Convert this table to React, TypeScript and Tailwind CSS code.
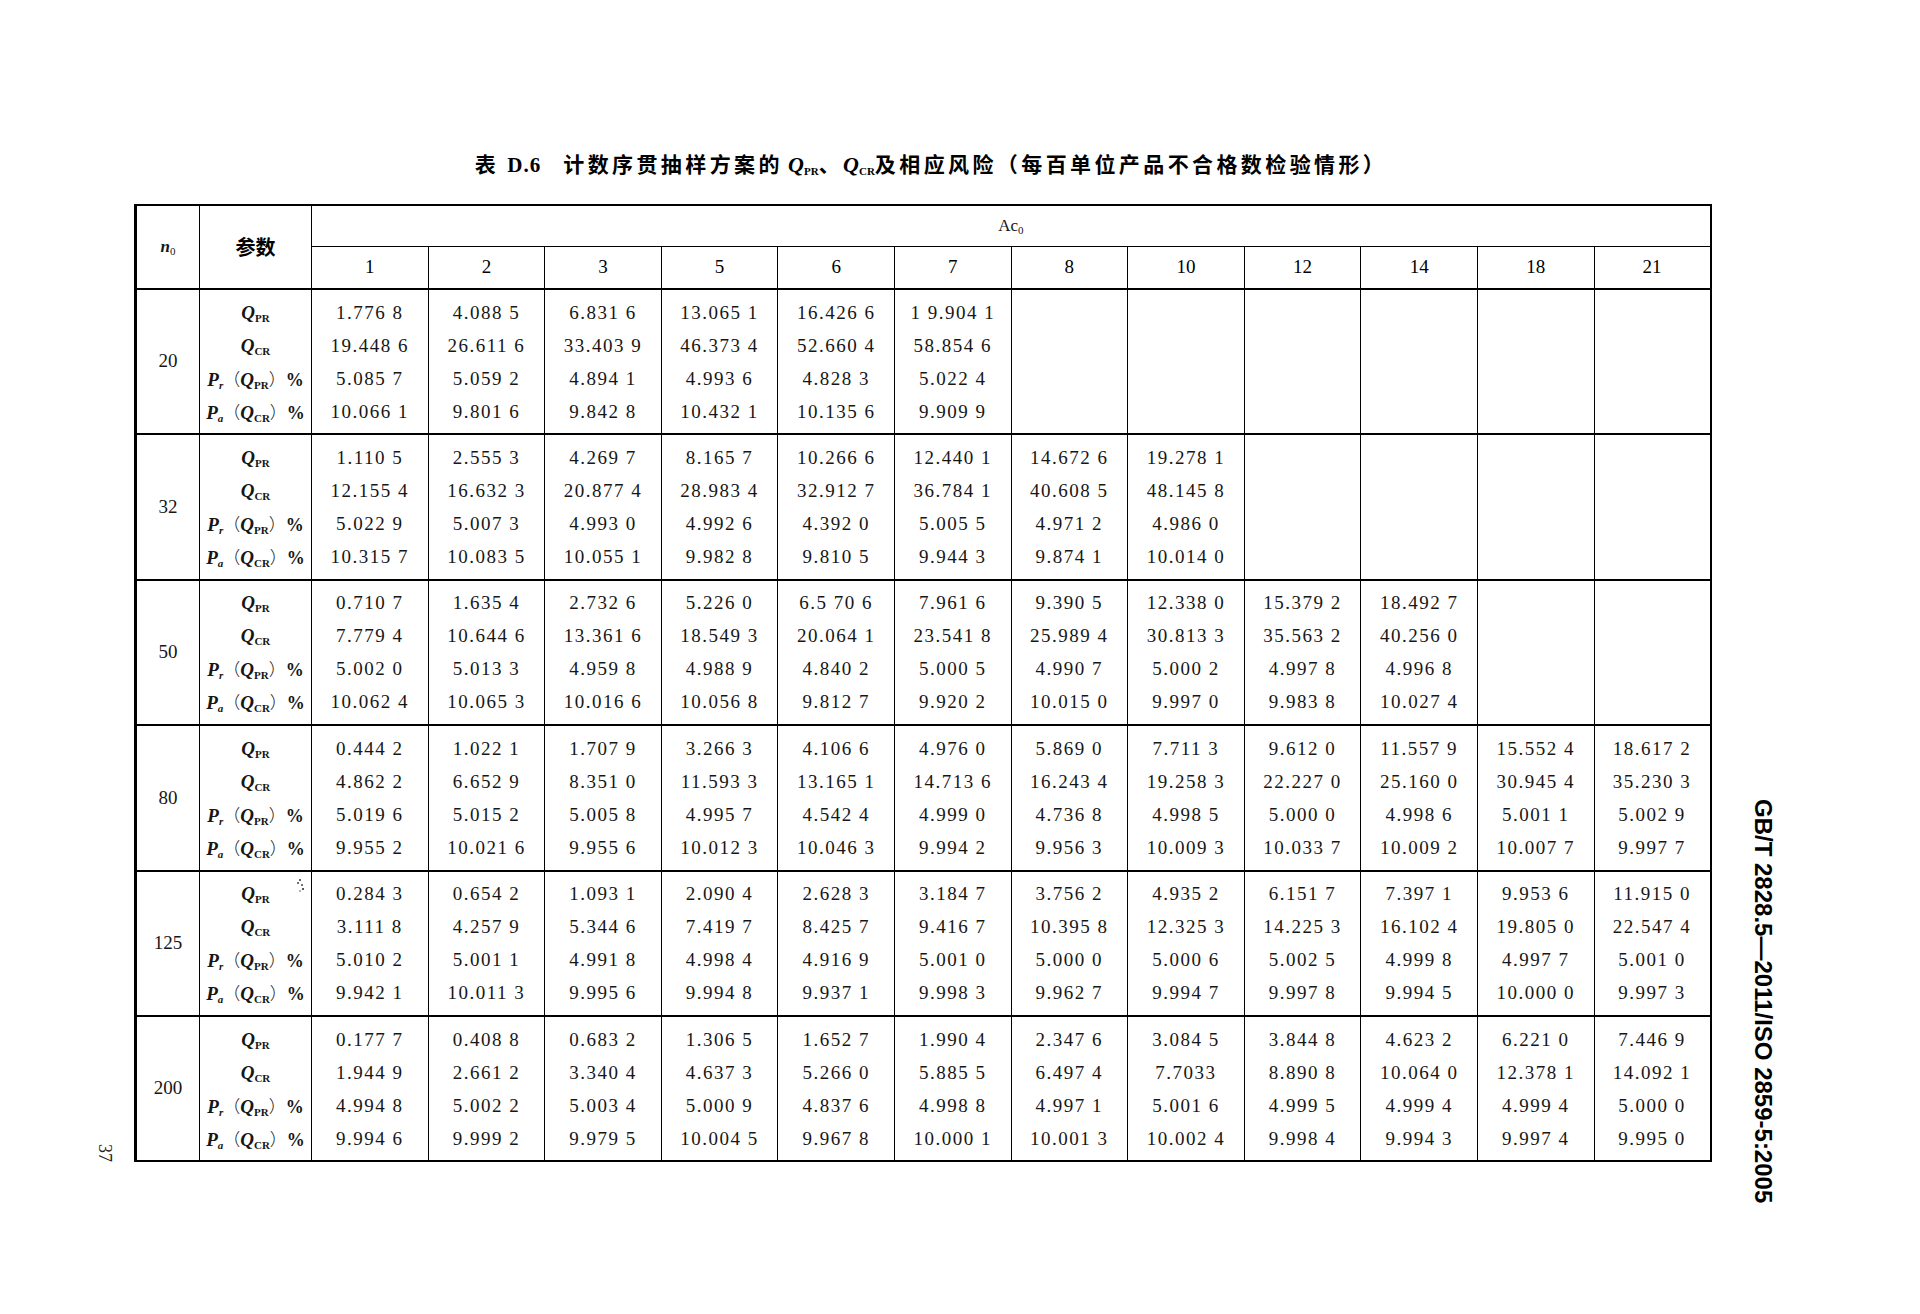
import React from "react";

const cols = ["1", "2", "3", "5", "6", "7", "8", "10", "12", "14", "18", "21"];

type Group = { n: string; rows: string[][] };

const groups: Group[] = [
  {
    n: "20",
    rows: [
      ["1.776 8", "4.088 5", "6.831 6", "13.065 1", "16.426 6", "1 9.904 1"],
      ["19.448 6", "26.611 6", "33.403 9", "46.373 4", "52.660 4", "58.854 6"],
      ["5.085 7", "5.059 2", "4.894 1", "4.993 6", "4.828 3", "5.022 4"],
      ["10.066 1", "9.801 6", "9.842 8", "10.432 1", "10.135 6", "9.909 9"],
    ],
  },
  {
    n: "32",
    rows: [
      ["1.110 5", "2.555 3", "4.269 7", "8.165 7", "10.266 6", "12.440 1", "14.672 6", "19.278 1"],
      ["12.155 4", "16.632 3", "20.877 4", "28.983 4", "32.912 7", "36.784 1", "40.608 5", "48.145 8"],
      ["5.022 9", "5.007 3", "4.993 0", "4.992 6", "4.392 0", "5.005 5", "4.971 2", "4.986 0"],
      ["10.315 7", "10.083 5", "10.055 1", "9.982 8", "9.810 5", "9.944 3", "9.874 1", "10.014 0"],
    ],
  },
  {
    n: "50",
    rows: [
      ["0.710 7", "1.635 4", "2.732 6", "5.226 0", "6.5 70 6", "7.961 6", "9.390 5", "12.338 0", "15.379 2", "18.492 7"],
      ["7.779 4", "10.644 6", "13.361 6", "18.549 3", "20.064 1", "23.541 8", "25.989 4", "30.813 3", "35.563 2", "40.256 0"],
      ["5.002 0", "5.013 3", "4.959 8", "4.988 9", "4.840 2", "5.000 5", "4.990 7", "5.000 2", "4.997 8", "4.996 8"],
      ["10.062 4", "10.065 3", "10.016 6", "10.056 8", "9.812 7", "9.920 2", "10.015 0", "9.997 0", "9.983 8", "10.027 4"],
    ],
  },
  {
    n: "80",
    rows: [
      ["0.444 2", "1.022 1", "1.707 9", "3.266 3", "4.106 6", "4.976 0", "5.869 0", "7.711 3", "9.612 0", "11.557 9", "15.552 4", "18.617 2"],
      ["4.862 2", "6.652 9", "8.351 0", "11.593 3", "13.165 1", "14.713 6", "16.243 4", "19.258 3", "22.227 0", "25.160 0", "30.945 4", "35.230 3"],
      ["5.019 6", "5.015 2", "5.005 8", "4.995 7", "4.542 4", "4.999 0", "4.736 8", "4.998 5", "5.000 0", "4.998 6", "5.001 1", "5.002 9"],
      ["9.955 2", "10.021 6", "9.955 6", "10.012 3", "10.046 3", "9.994 2", "9.956 3", "10.009 3", "10.033 7", "10.009 2", "10.007 7", "9.997 7"],
    ],
  },
  {
    n: "125",
    rows: [
      ["0.284 3", "0.654 2", "1.093 1", "2.090 4", "2.628 3", "3.184 7", "3.756 2", "4.935 2", "6.151 7", "7.397 1", "9.953 6", "11.915 0"],
      ["3.111 8", "4.257 9", "5.344 6", "7.419 7", "8.425 7", "9.416 7", "10.395 8", "12.325 3", "14.225 3", "16.102 4", "19.805 0", "22.547 4"],
      ["5.010 2", "5.001 1", "4.991 8", "4.998 4", "4.916 9", "5.001 0", "5.000 0", "5.000 6", "5.002 5", "4.999 8", "4.997 7", "5.001 0"],
      ["9.942 1", "10.011 3", "9.995 6", "9.994 8", "9.937 1", "9.998 3", "9.962 7", "9.994 7", "9.997 8", "9.994 5", "10.000 0", "9.997 3"],
    ],
  },
  {
    n: "200",
    rows: [
      ["0.177 7", "0.408 8", "0.683 2", "1.306 5", "1.652 7", "1.990 4", "2.347 6", "3.084 5", "3.844 8", "4.623 2", "6.221 0", "7.446 9"],
      ["1.944 9", "2.661 2", "3.340 4", "4.637 3", "5.266 0", "5.885 5", "6.497 4", "7.7033", "8.890 8", "10.064 0", "12.378 1", "14.092 1"],
      ["4.994 8", "5.002 2", "5.003 4", "5.000 9", "4.837 6", "4.998 8", "4.997 1", "5.001 6", "4.999 5", "4.999 4", "4.999 4", "5.000 0"],
      ["9.994 6", "9.999 2", "9.979 5", "10.004 5", "9.967 8", "10.000 1", "10.001 3", "10.002 4", "9.998 4", "9.994 3", "9.997 4", "9.995 0"],
    ],
  },
];

function Q({ s }: { s: string }) {
  return (
    <span className="whitespace-nowrap">
      <span className="font-bold italic text-[19px]">Q</span>
      <span className="relative top-[3px] text-[11px] font-bold not-italic">{s}</span>
    </span>
  );
}

function P({ s, q }: { s: string; q: string }) {
  return (
    <span className="whitespace-nowrap">
      <span className="font-bold italic text-[19px]">P</span>
      <span className="relative top-[3px] text-[11px] font-bold italic">{s}</span>
      <span className="font-['Noto_Sans_CJK_SC',sans-serif] text-[17px] font-light">（</span>
      <Q s={q} />
      <span className="font-['Noto_Sans_CJK_SC',sans-serif] text-[17px] font-light">）</span>
      <span className="font-bold text-[18px]">%</span>
    </span>
  );
}

function Labels() {
  return (
    <>
      <div className="h-[33px] leading-[33px]"><Q s="PR" /></div>
      <div className="h-[33px] leading-[33px]"><Q s="CR" /></div>
      <div className="h-[33px] leading-[33px]"><P s="r" q="PR" /></div>
      <div className="h-[33px] leading-[33px]"><P s="a" q="CR" /></div>
    </>
  );
}

export default function App() {
  return (
    <div className="w-[1920px] h-[1314px] bg-white flex overflow-hidden text-[#161616] font-['Liberation_Serif','Noto_Sans_CJK_SC',serif]">
      {/* page number */}
      <div className="w-[134px] shrink-0 pt-[1144px] pl-[97px]">
        <div className="[writing-mode:vertical-rl] text-[18px] leading-[16px] text-[#222]">37</div>
      </div>

      {/* main block */}
      <div className="w-[1580px] shrink-0 pt-[148px]">
        <h1 className="pl-[14px] text-center text-[21px] leading-[30px] font-bold tracking-[3.4px] font-['Noto_Sans_CJK_SC',sans-serif] text-black">
          <span>表 </span>
          <span className="font-['Liberation_Serif',serif] tracking-[1px]">D.6</span>
          <span className="inline-block w-[22px]"></span>
          <span>计数序贯抽样方案的</span>
          <span className="font-['Liberation_Serif',serif] tracking-normal">
            {" "}
            <span className="italic text-[22px]">Q</span>
            <span className="relative top-[3px] text-[11px]">PR</span>
          </span>
          <span>、</span>
          <span className="font-['Liberation_Serif',serif] tracking-normal">
            <span className="italic text-[22px]">Q</span>
            <span className="relative top-[3px] text-[11px]">CR</span>
          </span>
          <span>及相应风险（每百单位产品不合格数检验情形）</span>
        </h1>

        <table className="mt-[21px] w-[1575px] table-fixed border-collapse border-2 border-l-[3px] border-black">
          <colgroup>
            <col className="w-[64px]" />
            <col className="w-[112px]" />
            {cols.map((c) => (
              <col key={c} className="w-[116.6px]" />
            ))}
          </colgroup>
          <thead>
            <tr className="h-[41px]">
              <th rowSpan={2} className="border border-black font-normal text-center align-middle">
                <span className="italic font-bold text-[17px]">n</span>
                <span className="relative top-[3px] text-[11px]">0</span>
              </th>
              <th rowSpan={2} className="border border-black text-center align-middle font-bold text-[20px] font-['Noto_Sans_CJK_SC',sans-serif] text-black">
                参数
              </th>
              <th colSpan={12} className="border border-black border-b-[1.5px] font-normal text-center align-middle text-[17px]">
                Ac<span className="relative top-[3px] text-[11px]">0</span>
              </th>
            </tr>
            <tr className="h-[43px]">
              {cols.map((c) => (
                <th key={c} className="border border-black font-normal text-center align-middle text-[19px] text-black">
                  {c}
                </th>
              ))}
            </tr>
          </thead>
          <tbody>
            {groups.map((g) => (
              <tr key={g.n} className="h-[143.4px] border-t-2 border-black">
                <td className="border-r border-black text-center align-middle text-[19px]">{g.n}</td>
                <td className="relative border-r border-black text-center align-top py-[5.7px] px-0">
                  <Labels />
                  {g.n === "125" && (
                    <svg className="absolute left-[94px] top-[6px]" width="12" height="16" viewBox="0 0 12 16">
                      <circle cx="6" cy="2" r="1" fill="#333" />
                      <circle cx="4" cy="5" r="0.9" fill="#333" />
                      <circle cx="8" cy="7" r="0.9" fill="#333" />
                      <circle cx="9" cy="11" r="1.1" fill="#333" />
                      <circle cx="6" cy="13" r="0.8" fill="#555" />
                    </svg>
                  )}
                </td>
                {cols.map((c, i) => (
                  <td key={c} className="border-l border-black text-center align-top py-[5.7px] px-0 text-[19px] tracking-[1.5px]">
                    {g.rows.map((r, j) => (
                      <div key={j} className="h-[33px] leading-[33px] whitespace-nowrap">
                        {r[i] ?? ""}
                      </div>
                    ))}
                  </td>
                ))}
              </tr>
            ))}
          </tbody>
        </table>
      </div>

      {/* running header */}
      <div className="pl-[38px] pt-[799px]">
        <div className="[writing-mode:vertical-rl] font-['Liberation_Sans',sans-serif] font-bold text-[24px] leading-[22px] text-black whitespace-nowrap">
          GB/T 2828.5—2011/ISO 2859-5:2005
        </div>
      </div>
    </div>
  );
}
